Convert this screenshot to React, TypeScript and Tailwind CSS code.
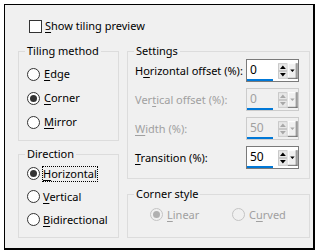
import React from "react";

const Key = ({ children }: { children: React.ReactNode }) => (
  <span className="underline underline-offset-[2px]">{children}</span>
);

function Radio({ checked, disabled }: { checked?: boolean; disabled?: boolean }) {
  return (
    <span
      className={`flex h-[13px] w-[13px] shrink-0 items-center justify-center rounded-full border ${
        disabled ? "border-[#c4c4c4] bg-[#f0f0f0]" : "border-[#333333] bg-white"
      }`}
    >
      {checked && (
        <span className={`h-[7px] w-[7px] rounded-full ${disabled ? "bg-[#b0b0b0]" : "bg-[#333333]"}`} />
      )}
    </span>
  );
}

function Spinner({ value, disabled }: { value: string; disabled?: boolean }) {
  const arrow = disabled ? "#a8a8a8" : "#000000";
  return (
    <div
      className={`flex h-[23px] w-[53px] shrink-0 border ${
        disabled ? "border-[#cccccc] bg-[#f0f0f0]" : "border-[#7a7a7a] bg-white"
      }`}
    >
      {/* edit field with the blue underline */}
      <div className="flex h-full w-[27px] items-center border-b-2 border-[#0078d7] pl-[3px] text-[12px]">
        <span className={disabled ? "text-[#a0a0a0]" : "text-black"}>{value}</span>
      </div>
      {/* spin buttons + dropdown */}
      <svg width="20" height="16" viewBox="0 0 20 16" className="ml-[5px] mt-[3px]">
        <rect x="0.5" y="0.5" width="9" height="7" fill="#e8e8e8" stroke="#c8c8c8" />
        <rect x="0.5" y="8.5" width="9" height="7" fill="#e8e8e8" stroke="#c8c8c8" />
        <polygon points="2,6 8,6 5,2.5" fill={arrow} />
        <polygon points="2,10 8,10 5,13.5" fill={arrow} />
        <rect x="10" y="0" width="10" height="16" fill="#f0f0f0" />
        <line x1="10.5" y1="0" x2="10.5" y2="15" stroke="#ffffff" />
        <line x1="10" y1="0.5" x2="19" y2="0.5" stroke="#ffffff" />
        <line x1="18.5" y1="0" x2="18.5" y2="16" stroke="#a0a0a0" />
        <line x1="19.5" y1="0" x2="19.5" y2="16" stroke="#696969" />
        <line x1="10" y1="15.5" x2="20" y2="15.5" stroke="#696969" />
        <polygon points="12.5,6.5 17,6.5 14.75,9" fill={arrow} />
      </svg>
    </div>
  );
}

function Row({ label, value, disabled }: { label: React.ReactNode; value: string; disabled?: boolean }) {
  return (
    <div className="flex h-[23px] items-center">
      <span className={`w-[111px] whitespace-nowrap ${disabled ? "text-[#a0a0a0]" : "text-black"}`}>{label}</span>
      <Spinner value={value} disabled={disabled} />
    </div>
  );
}

function Option({ label, checked, focus }: { label: React.ReactNode; checked?: boolean; focus?: boolean }) {
  return (
    <div className="flex h-[23px] items-center gap-[3px]">
      <Radio checked={checked} />
      <span className={focus ? "-ml-[1px] border border-dotted border-black leading-[14px]" : ""}>{label}</span>
    </div>
  );
}

export default function App() {
  return (
    <div className="h-[251px] w-[319px] bg-white pl-[4px] pt-[4px] font-['Noto_Sans',sans-serif] text-[11px] leading-[16px] text-black">
      <div className="h-[246px] w-[311px] border-b-2 border-l border-r-2 border-t border-black bg-[#f0f0f0]">
        {/* Show tiling preview */}
        <div className="mt-[13px] flex h-[16px] items-center gap-[3px] pl-[24px]">
          <span className="h-[13px] w-[13px] border border-[#333333] bg-white" />
          <span>
            <Key>S</Key>how tiling preview
          </span>
        </div>

        <div className="mt-[9px] flex gap-[8px] pl-[13px]">
          {/* left column */}
          <div className="flex w-[101px] flex-col gap-[5px]">
            <fieldset className="h-[98px] border border-[#dcdcdc]">
              <legend className="ml-[6px] px-[2px]">Tiling method</legend>
              <div className="flex flex-col pl-[8px] pt-[3px]">
                <div className="flex h-[24px] items-center gap-[4px]">
                  <Radio />
                  <span><Key>E</Key>dge</span>
                </div>
                <div className="flex h-[24px] items-center gap-[4px]">
                  <Radio checked />
                  <span><Key>C</Key>orner</span>
                </div>
                <div className="flex h-[24px] items-center gap-[4px]">
                  <Radio />
                  <span><Key>M</Key>irror</span>
                </div>
              </div>
            </fieldset>
            <fieldset className="h-[92px] border border-[#dcdcdc]">
              <legend className="ml-[6px] px-[2px]">Direction</legend>
              <div className="flex flex-col pl-[8px]">
                <Option checked focus label={<><Key>H</Key>orizontal</>} />
                <Option label={<><Key>V</Key>ertical</>} />
                <Option label={<><Key>B</Key>idirectional</>} />
              </div>
            </fieldset>
          </div>

          {/* right column */}
          <div className="flex w-[183px] flex-col gap-[7px]">
            <fieldset className="h-[136px] border border-[#dcdcdc]">
              <legend className="ml-[6px] px-[2px]">Settings</legend>
              <div className="flex flex-col gap-[6px] pl-[7px]">
                <Row label={<>H<Key>o</Key>rizontal offset (%):</>} value="0" />
                <Row label={<>Ver<Key>t</Key>ical offset (%):</>} value="0" disabled />
                <Row label={<><Key>W</Key>idth (%):</>} value="50" disabled />
                <Row label={<><Key>T</Key>ransition (%):</>} value="50" />
              </div>
            </fieldset>
            <fieldset className="h-[52px] border border-[#dcdcdc]">
              <legend className="ml-[6px] px-[2px]">Corner style</legend>
              <div className="flex pl-[22px] pt-[1px] text-[#a0a0a0]">
                <div className="flex h-[23px] w-[82px] items-center gap-[4px]">
                  <Radio checked disabled />
                  <span><Key>L</Key>inear</span>
                </div>
                <div className="flex h-[23px] items-center gap-[4px]">
                  <Radio disabled />
                  <span>C<Key>u</Key>rved</span>
                </div>
              </div>
            </fieldset>
          </div>
        </div>
      </div>
    </div>
  );
}
